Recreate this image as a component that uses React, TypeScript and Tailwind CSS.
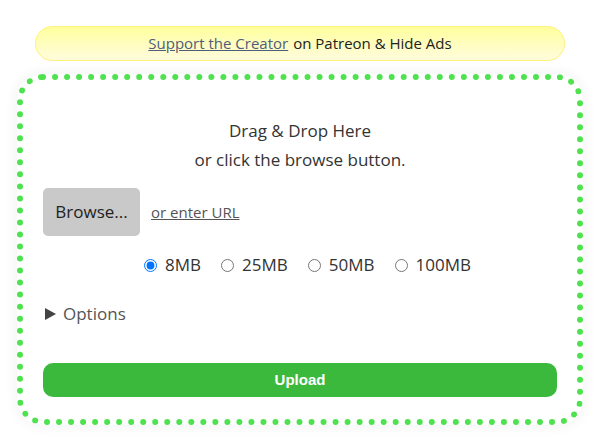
import { useState } from "react"

const sizes = ["8MB", "25MB", "50MB", "100MB"]

export default function App() {
  const [size, setSize] = useState("8MB")

  return (
    <div className="w-full min-h-[437px] bg-white pt-[26px] font-['Open_Sans',sans-serif] text-[#333]">
      {/* Patreon banner */}
      <div className="mx-[35px] h-[35px] flex items-center justify-center rounded-[18px] border border-[#fff27a] bg-gradient-to-b from-[#ffff9c] to-[#fffbdc] text-[15px] text-[#222]">
        <a href="#" className="underline text-[#4f5d7a] mr-[5px]">Support the Creator</a>
        <span>on Patreon &amp; Hide Ads</span>
      </div>

      {/* Drop zone */}
      <div className="mx-[17px] mt-[13px] rounded-[26px] border-[6px] border-dotted border-[#4fe24f] bg-white shadow-[0_0_14px_rgba(0,40,0,0.07)] px-[20px] pt-[36px] pb-[22px]">
        <div className="text-center text-[17px] leading-[29px] text-[#333]">
          <div>Drag &amp; Drop Here</div>
          <div>or click the browse button.</div>
        </div>

        <div className="flex items-center mt-[14px]">
          <button className="w-[97px] h-[48px] rounded-[5px] bg-[#c9c9c9] text-[17px] text-[#222]">Browse...</button>
          <a href="#" className="ml-[11px] mt-[1px] text-[15px] text-[#555] underline">or enter URL</a>
        </div>

        <div className="flex items-center justify-center h-[24px] mt-[17px] pl-[15px] text-[17px] text-[#333]">
          {sizes.map((s, i) => (
            <label key={s} className={`flex items-center ${i > 0 ? "ml-[20px]" : ""}`}>
              <input
                type="radio"
                name="size"
                checked={size === s}
                onChange={() => setSize(s)}
                className="m-0 w-[13px] h-[13px]"
              />
              <span className="ml-[8px]">{s}</span>
            </label>
          ))}
        </div>

        <div className="flex items-center h-[24px] mt-[25px] text-[17px] text-[#555]">
          <svg width="11" height="12" viewBox="0 0 11 12" className="ml-[2px] mr-[7px]">
            <polygon points="0,0 11,6 0,12" fill="#444" />
          </svg>
          <span>Options</span>
        </div>

        <button className="mt-[37px] w-full h-[34px] rounded-[10px] bg-[#3bb93d] text-white text-[15px] font-bold font-['Liberation_Sans',sans-serif]">
          Upload
        </button>
      </div>
    </div>
  )
}
